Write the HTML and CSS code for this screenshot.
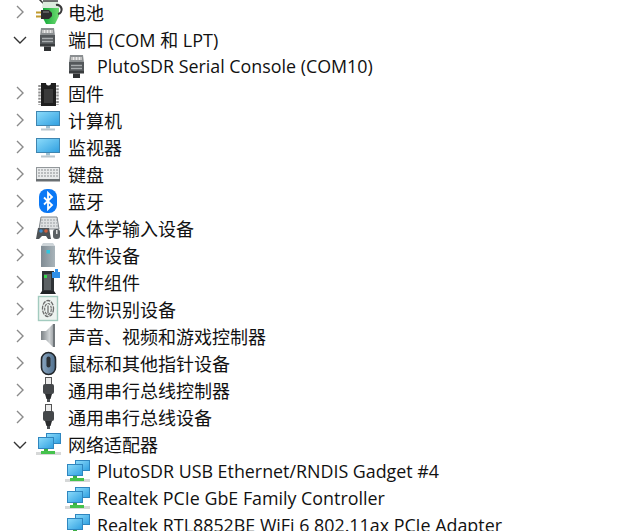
FILE: index.html
```html
<!DOCTYPE html>
<html lang="zh-CN">
<head>
    <meta charset="UTF-8">
    <meta name="viewport" content="width=device-width, initial-scale=1.0">
    <title>设备管理器</title>
    <link rel="stylesheet" href="styles.css">
</head>
<body>
    <svg class="defs" width="0" height="0">
        <defs>
            <linearGradient id="screen" x1="0" y1="0" x2="1" y2="1"><stop offset="0" stop-color="#8ddcfb"/><stop offset="1" stop-color="#2f9fe0"/></linearGradient>
            <linearGradient id="green" x1="0" y1="0" x2="1" y2="0"><stop offset="0" stop-color="#12a838"/><stop offset="1" stop-color="#6fdc72"/></linearGradient>
            <linearGradient id="steel" x1="0" y1="0" x2="1" y2="0"><stop offset="0" stop-color="#7f8b93"/><stop offset="1" stop-color="#a9b4ba"/></linearGradient>
            <linearGradient id="cone" x1="0" y1="0" x2="1" y2="0"><stop offset="0" stop-color="#7b8185"/><stop offset="0.6" stop-color="#cfd3d5"/><stop offset="1" stop-color="#8b9094"/></linearGradient>
            <linearGradient id="shell" x1="0" y1="0" x2="1" y2="0"><stop offset="0" stop-color="#8aa6c0"/><stop offset="1" stop-color="#4f6f8d"/></linearGradient>

            <symbol id="closed" viewBox="0 0 16 16"><path d="M6 2l6 6-6 6" fill="none" stroke="#8a8a8a" stroke-width="1.4"/></symbol>
            <symbol id="open" viewBox="0 0 16 16"><path d="M3 6l6 6 6-6" fill="none" stroke="#333" stroke-width="1.4"/></symbol>
            <symbol id="battery" viewBox="0 0 24 26">
                <path d="M3 0l5 5" stroke="#333" stroke-width="1.500"/>
                <path d="M7 4h15l1 5v8l-4 8H10l-3-6z" fill="url(#green)"/>
                <path d="M7 2h15l1 7H6z" fill="#dcebdd"/>
                <path d="M7 2h15" stroke="#444" stroke-width="1.500"/>
                <path d="M20 6a4.500 4.500 0 0 1 2 9" fill="none" stroke="#3a3a3a" stroke-width="2.200"/>
                <path d="M5 11h8l3 3v3l-3 3H5z" fill="#2d2d2d"/>
                <path d="M7 13h6" stroke="#8b8b8b"/>
                <path d="M0 13.500h5M0 17.500h5" stroke="#c09a2e" stroke-width="2"/>
            </symbol>
            <symbol id="port" viewBox="0 0 24 26">
                <path d="M5 2h13l1 8H4z" fill="#8b8f91"/>
                <path d="M6 4h11v3H6z" fill="#e9e9e9"/>
                <path d="M7 4v3M10 4v3M13 4v3M16 4v3" stroke="#888" stroke-width="0.800"/>
                <rect x="4" y="9" width="15" height="11" fill="#54585b"/>
                <path d="M6 12.500h11M6 15.500h11" stroke="#a8acae" stroke-width="1.300"/>
                <rect x="4" y="18" width="15" height="2.500" fill="#3a3d3f"/>
                <rect x="8" y="20.500" width="7" height="4.500" fill="#2f3133"/>
            </symbol>
            <symbol id="chip" viewBox="0 0 24 26">
                <path d="M5 3h5a2.500 2.500 0 0 0 5 0h5v23H5z" fill="#1f1f1f"/>
                <path d="M3.500 5v20M21.500 5v20" stroke="#8e8e8e" stroke-width="2.500" stroke-dasharray="2 1.200"/>
                <rect x="8" y="9" width="9" height="14" fill="#3a3a3a"/>
            </symbol>
            <symbol id="monitor" viewBox="0 0 24 26">
                <rect x="0.500" y="4.500" width="23" height="14" fill="url(#screen)" stroke="#3f85b0"/>
                <rect x="10" y="19" width="4" height="2.500" fill="#9fc1d3"/>
                <rect x="5" y="21.500" width="14" height="2" fill="#b9c6cd"/>
            </symbol>
            <symbol id="keyboard" viewBox="0 0 24 26">
                <rect x="0.500" y="6.500" width="23" height="13" fill="#e8eaeb" stroke="#92979a"/>
                <path d="M2 9h20M2 12h20M2 15h20" stroke="#a9adb0" stroke-width="1.400" stroke-dasharray="2 1"/>
                <rect x="0" y="18" width="24" height="2.500" fill="#6a6f72"/>
            </symbol>
            <symbol id="bluetooth" viewBox="0 0 24 26">
                <rect x="3" y="1" width="18" height="24" rx="8" fill="#0a78f5"/>
                <path d="M8 9.500l8 7.500-4 4V5l4 4-8 7.500" fill="none" stroke="#fff" stroke-width="1.800"/>
            </symbol>
            <symbol id="hid" viewBox="0 0 24 26">
                <path d="M5 2h16l2 12H3z" fill="#dfe2e3" stroke="#80868a"/>
                <path d="M5 5h16M5 8h16M5 11h17" stroke="#9ba0a3" stroke-dasharray="2 1"/>
                <path d="M2 13h11l2 11h-3l-2-3H6l-3 3H0z" fill="#4e5357"/>
                <circle cx="5" cy="16" r="1.800" fill="#3f8fd0"/>
                <circle cx="10" cy="16" r="1.800" fill="#d0603f"/>
                <rect x="17" y="14" width="7" height="10" rx="3" fill="#5b6063"/>
                <rect x="20" y="15" width="1.500" height="4" fill="#ddd"/>
            </symbol>
            <symbol id="tower" viewBox="0 0 24 26">
                <path d="M5 4h14v21H5z" fill="url(#steel)"/>
                <path d="M7 1h10l2 3H5z" fill="#cdd4d8"/>
                <rect x="10.500" y="8" width="3.500" height="3.500" fill="#2fc6df"/>
            </symbol>
            <symbol id="component" viewBox="0 0 24 26">
                <rect x="6" y="2" width="12" height="20" fill="#2e3235"/>
                <rect x="8" y="5" width="7" height="16" fill="#5c6164"/>
                <rect x="8" y="6" width="3" height="3" fill="#35d64e"/>
                <path d="M6 22h12l2 3H4z" fill="#202326"/>
                <path d="M16 3h3V0h3v3h2v6h-8z" fill="#2f8fe8"/>
            </symbol>
            <symbol id="finger" viewBox="0 0 24 26">
                <rect x="2.500" y="0.500" width="19" height="24" fill="#edf3f0" stroke="#a3cbbf" stroke-width="1.400"/>
                <ellipse cx="12" cy="12.500" rx="5.500" ry="8" fill="none" stroke="#6b6b6b" stroke-width="1.300" stroke-dasharray="4 1"/>
                <ellipse cx="12" cy="13" rx="3.300" ry="5.500" fill="none" stroke="#6f6f6f" stroke-width="1.200" stroke-dasharray="3 1"/>
                <path d="M12 9.500v8" stroke="#6f6f6f" stroke-width="1.300"/>
            </symbol>
            <symbol id="speaker" viewBox="0 0 24 26">
                <path d="M5 8h5l7-7h2v23h-2l-7-7H5z" fill="url(#cone)"/>
                <path d="M17 1h2v23h-2z" fill="#70767a"/>
            </symbol>
            <symbol id="mouse" viewBox="0 0 24 26">
                <rect x="5.500" y="2.500" width="14" height="22" rx="7" fill="url(#shell)" stroke="#22262a" stroke-width="1.600"/>
                <rect x="10.500" y="6.500" width="4" height="11" rx="2" fill="#2c3135"/>
            </symbol>
            <symbol id="usb" viewBox="0 0 24 26">
                <rect x="9.500" y="0.500" width="6" height="7" fill="#ececec" stroke="#555"/>
                <rect x="7" y="7" width="11" height="10" rx="2" fill="#44474a"/>
                <path d="M9 17h7l-1.500 5h-4z" fill="#2a2c2e"/>
                <rect x="11" y="22" width="3" height="3" fill="#4a4d50"/>
            </symbol>
            <symbol id="network" viewBox="0 0 24 26">
                <rect x="10.500" y="2.500" width="14" height="10" fill="url(#screen)" stroke="#2f86bf"/>
                <rect x="2.500" y="6.500" width="15" height="11" fill="url(#screen)" stroke="#2f86bf"/>
                <rect x="8" y="18" width="4" height="3" fill="#3cb043"/>
                <rect x="0" y="21" width="25" height="3" fill="#d6d8d8"/>
                <rect x="5" y="20" width="14" height="3" fill="#45c24c"/>
            </symbol>
        </defs>
    </svg>

    <ul class="tree">
        <li class="row"><svg class="chev"><use href="#closed"/></svg><svg class="icon"><use href="#battery"/></svg><span>电池</span></li>
        <li class="row"><svg class="chev"><use href="#open"/></svg><svg class="icon"><use href="#port"/></svg><span>端口 (COM 和 LPT)</span></li>
        <li class="row child"><svg class="icon"><use href="#port"/></svg><span>PlutoSDR Serial Console (COM10)</span></li>
        <li class="row"><svg class="chev"><use href="#closed"/></svg><svg class="icon"><use href="#chip"/></svg><span>固件</span></li>
        <li class="row"><svg class="chev"><use href="#closed"/></svg><svg class="icon"><use href="#monitor"/></svg><span>计算机</span></li>
        <li class="row"><svg class="chev"><use href="#closed"/></svg><svg class="icon"><use href="#monitor"/></svg><span>监视器</span></li>
        <li class="row"><svg class="chev"><use href="#closed"/></svg><svg class="icon"><use href="#keyboard"/></svg><span>键盘</span></li>
        <li class="row"><svg class="chev"><use href="#closed"/></svg><svg class="icon"><use href="#bluetooth"/></svg><span>蓝牙</span></li>
        <li class="row"><svg class="chev"><use href="#closed"/></svg><svg class="icon"><use href="#hid"/></svg><span>人体学输入设备</span></li>
        <li class="row"><svg class="chev"><use href="#closed"/></svg><svg class="icon"><use href="#tower"/></svg><span>软件设备</span></li>
        <li class="row"><svg class="chev"><use href="#closed"/></svg><svg class="icon"><use href="#component"/></svg><span>软件组件</span></li>
        <li class="row"><svg class="chev"><use href="#closed"/></svg><svg class="icon"><use href="#finger"/></svg><span>生物识别设备</span></li>
        <li class="row"><svg class="chev"><use href="#closed"/></svg><svg class="icon"><use href="#speaker"/></svg><span>声音、视频和游戏控制器</span></li>
        <li class="row"><svg class="chev"><use href="#closed"/></svg><svg class="icon"><use href="#mouse"/></svg><span>鼠标和其他指针设备</span></li>
        <li class="row"><svg class="chev"><use href="#closed"/></svg><svg class="icon"><use href="#usb"/></svg><span>通用串行总线控制器</span></li>
        <li class="row"><svg class="chev"><use href="#closed"/></svg><svg class="icon"><use href="#usb"/></svg><span>通用串行总线设备</span></li>
        <li class="row"><svg class="chev"><use href="#open"/></svg><svg class="icon"><use href="#network"/></svg><span>网络适配器</span></li>
        <li class="row child"><svg class="icon"><use href="#network"/></svg><span>PlutoSDR USB Ethernet/RNDIS Gadget #4</span></li>
        <li class="row child"><svg class="icon"><use href="#network"/></svg><span>Realtek PCIe GbE Family Controller</span></li>
        <li class="row child"><svg class="icon"><use href="#network"/></svg><span>Realtek RTL8852BE WiFi 6 802.11ax PCIe Adapter</span></li>
    </ul>
</body>
</html>
```

FILE: styles.css
```css
html, body {
    height: 100%;
    margin: 0;
    overflow: hidden;
    background-color: #fff;
}
body {
    font-family: "Open Sans", "Noto Sans CJK SC", sans-serif;
    font-size: 18px;
    color: #111;
}
.defs {
    position: absolute;
}
symbol {
    overflow: visible;
}
.tree {
    list-style-type: none;
    margin: -2px 0 0;
    padding: 0;
}
.row {
    display: flex;
    align-items: center;
    height: 27.05px;
    padding-left: 11px;
    white-space: nowrap;
}
.child {
    padding-left: 65px;
    font-size: 17.85px;
}
.chev {
    width: 16px;
    height: 16px;
    margin-right: 9px;
    flex: none;
}
.icon {
    width: 24px;
    height: 26px;
    margin-right: 8px;
    flex: none;
    overflow: visible;
}
```
